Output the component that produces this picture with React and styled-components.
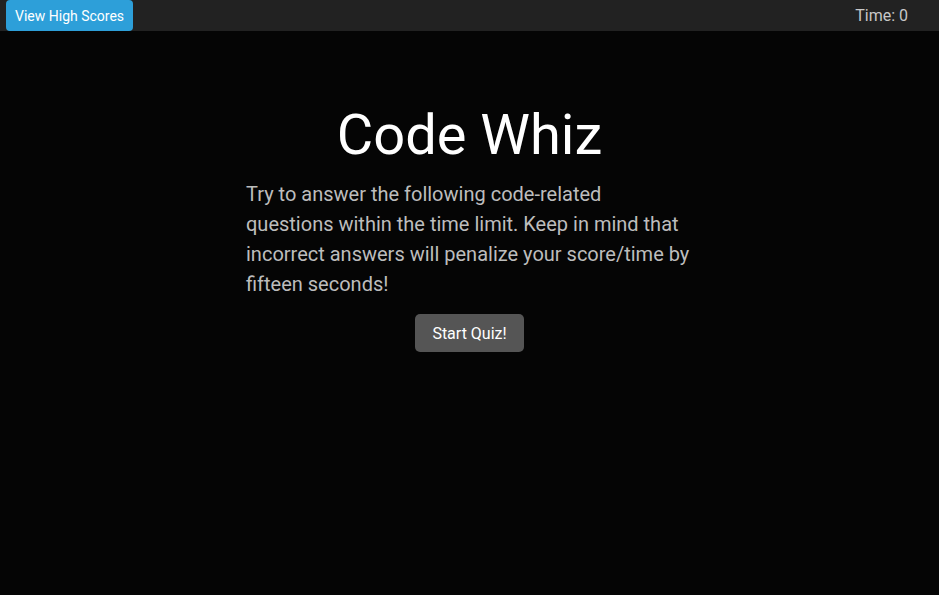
import React from "react";
import styled, { createGlobalStyle } from "styled-components";

const Global = createGlobalStyle`
  html, body { margin: 0; padding: 0; background: #050505; }
  body { font-family: Roboto, "Noto Sans", sans-serif; }
  * { box-sizing: border-box; }
`;

const Page = styled.div`
  min-height: 595px;
  background: #050505;
  display: flex;
  flex-direction: column;
`;

const Header = styled.header`
  height: 31px;
  background: #222222;
  display: flex;
  align-items: stretch;
  justify-content: space-between;
  padding: 0 31px 0 6px;
`;

const HighScoresButton = styled.button`
  background: #2d9fd9;
  color: #fff;
  border: none;
  border-radius: 4px;
  height: 31px;
  padding: 0 9px;
  font-family: Roboto, sans-serif;
  font-size: 14px;
  cursor: pointer;
`;

const Timer = styled.div`
  color: #c8c8c8;
  font-size: 16px;
  display: flex;
  align-items: center;
`;

const Main = styled.main`
  display: flex;
  flex-direction: column;
  align-items: center;
  padding-top: 71px;
`;

const Title = styled.h1`
  margin: 0;
  font-weight: 400;
  font-size: 56px;
  line-height: 66px;
  color: #fff;
`;

const Intro = styled.p`
  margin: 11px 0 0;
  width: 445px;
  margin-left: -2px;
  font-size: 20px;
  line-height: 30px;
  color: #bdbdbd;
`;

const StartButton = styled.button`
  margin-top: 15px;
  background: #555555;
  color: #fff;
  border: none;
  border-radius: 5px;
  height: 38px;
  padding: 0 17px;
  font-family: Roboto, sans-serif;
  font-size: 16px;
  cursor: pointer;
`;

export default function App() {
  return (
    <Page>
      <Global />
      <Header>
        <HighScoresButton>View High Scores</HighScoresButton>
        <Timer>Time: 0</Timer>
      </Header>
      <Main>
        <Title>Code Whiz</Title>
        <Intro>
          Try to answer the following code-related questions within the time
          limit. Keep in mind that incorrect answers will penalize your
          score/time by fifteen seconds!
        </Intro>
        <StartButton>Start Quiz!</StartButton>
      </Main>
    </Page>
  );
}
